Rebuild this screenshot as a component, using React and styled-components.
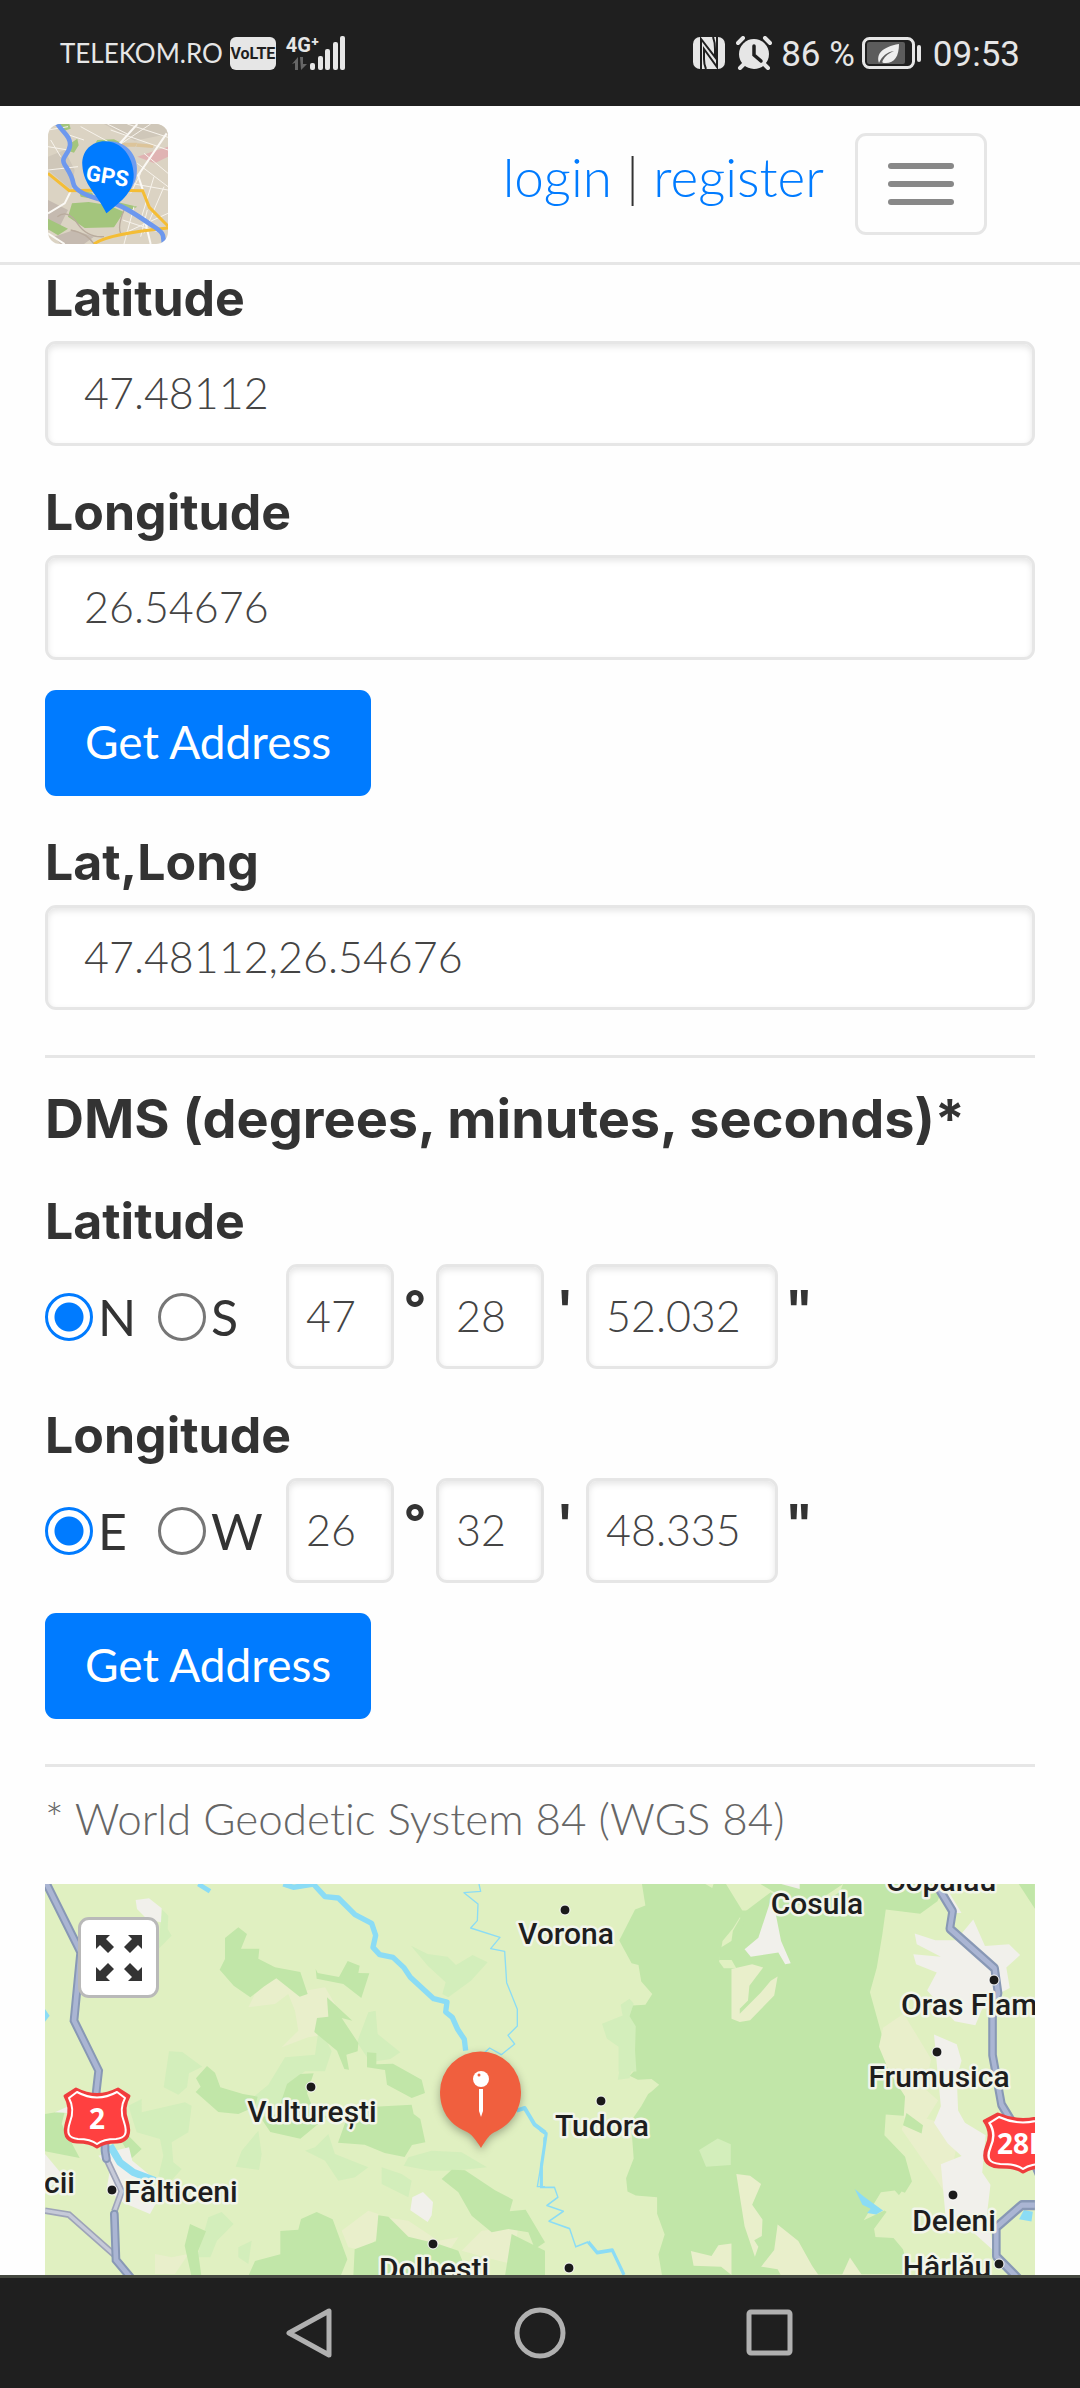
import React from "react";
import styled, { createGlobalStyle } from "styled-components";

const PLACES = [
  { name: "Vulturești", x: 267, y: 238, dot: [266, 203] },
  { name: "Fălticeni", x: 79, y: 318, dot: [67, 306], anchor: "start" },
  { name: "cii", x: 30, y: 309, anchor: "end" },
  { name: "Dolhești", x: 389, y: 395, dot: [388, 360] },
  { name: "Vorona", x: 521, y: 60, dot: [520, 26] },
  { name: "Cosula", x: 772, y: 30 },
  { name: "Copalau", x: 896, y: 7 },
  { name: "Oras Flam", x: 856, y: 131, dot: [949, 96], anchor: "start" },
  { name: "Frumusica", x: 894, y: 203, dot: [892, 168] },
  { name: "Deleni", x: 909, y: 347, dot: [908, 311] },
  { name: "Hârlău", x: 902, y: 393, dot: [954, 380] },
  { name: "Tudora", x: 557, y: 252, dot: [556, 217] },
];

export default function App() {
  return (
    <Page>
      <GlobalStyle />
      <StatusBar />
      <Header>
        <LogoLink href="#" aria-label="GPS home">
          <Logo />
        </LogoLink>
        <Account>
          <a href="#login">login</a> | <a href="#register">register</a>
        </Account>
        <Toggler type="button" aria-label="Toggle navigation">
          <span />
          <span />
          <span />
        </Toggler>
      </Header>
      <Main>
        <Field id="latitude" label="Latitude" value="47.48112" first />
        <Field id="longitude" label="Longitude" value="26.54676" />
        <Button type="button">Get Address</Button>
        <Field id="latlong" label="Lat,Long" value="47.48112,26.54676" />
        <Divider />
        <Title>DMS (degrees, minutes, seconds)*</Title>
        <DmsField
          label="Latitude"
          name="ns"
          options={["N", "S"]}
          values={["47", "28", "52.032"]}
          first
        />
        <DmsField
          label="Longitude"
          name="ew"
          options={["E", "W"]}
          values={["26", "32", "48.335"]}
        />
        <Button type="button">Get Address</Button>
        <Divider />
        <Note>* World Geodetic System 84 (WGS 84)</Note>
        <MapBox>
          <MapDrawing />
          <FullscreenButton type="button" aria-label="Full screen">
            <svg width="46" height="46" viewBox="0 0 46 46" fill="#333">
              {[0, 90, 180, 270].map((turn) => (
                <path
                  key={turn}
                  transform={`rotate(${turn} 23 23)`}
                  d="M0 0h14l-4 4 8 8-6 6-8-8-4 4z"
                />
              ))}
            </svg>
          </FullscreenButton>
        </MapBox>
      </Main>
      <NavBar>
        <button type="button" aria-label="Back">
          <svg width="50" height="56" viewBox="0 0 50 56">
            <path d="M44 5v44L4 27z" />
          </svg>
        </button>
        <button type="button" aria-label="Home">
          <svg width="56" height="56" viewBox="0 0 56 56">
            <circle cx="28" cy="27" r="23" />
          </svg>
        </button>
        <button type="button" aria-label="Recent apps">
          <svg width="56" height="56" viewBox="0 0 56 56">
            <rect x="7" y="6" width="41" height="41" rx="2" />
          </svg>
        </button>
      </NavBar>
    </Page>
  );
}

function Field({ id, label, value, first }) {
  return (
    <FieldGroup $first={first}>
      <Label htmlFor={id}>{label}</Label>
      <Input id={id} type="text" defaultValue={value} />
    </FieldGroup>
  );
}

function DmsField({ label, name, options, values, first }) {
  const units = ["°", "'", '"'];
  const parts = ["degrees", "minutes", "seconds"];
  return (
    <DmsGroup $first={first}>
      <Label as="legend">{label}</Label>
      <DmsRow>
        <Options>
          {options.map((option, i) => (
            <Option key={option}>
              <Radio type="radio" name={name} defaultChecked={i === 0} />
              {option}
            </Option>
          ))}
        </Options>
        {values.map((value, i) => (
          <React.Fragment key={parts[i]}>
            <Input
              type="text"
              aria-label={`${label} ${parts[i]}`}
              defaultValue={value}
              $width={i === 2 ? 192 : 108}
            />
            <Unit>{units[i]}</Unit>
          </React.Fragment>
        ))}
      </DmsRow>
    </DmsGroup>
  );
}

function StatusBar() {
  return (
    <Status>
      <StatusGroup>
        <Carrier>TELEKOM.RO</Carrier>
        <Volte>VoLTE</Volte>
        <Signal>
          <span>4G⁺</span>
          <svg width="60" height="34" viewBox="0 0 60 34" fill="#e6e6e6">
            <path d="M6 28l6-7v13h-3v-7zM14 21h3v7h4l-6 6z" fill="#666" />
            <rect x="24" y="27" width="5" height="7" rx="2" />
            <rect x="32" y="20" width="5" height="14" rx="2" />
            <rect x="39" y="13" width="5" height="21" rx="2" />
            <rect x="47" y="6" width="5" height="28" rx="2" />
            <rect x="54" y="0" width="5" height="34" rx="2" />
          </svg>
        </Signal>
      </StatusGroup>
      <StatusGroup>
        <svg width="32" height="32" viewBox="0 0 32 32">
          <rect width="32" height="32" rx="7" fill="#e6e6e6" />
          <path
            d="M8 32V2l14 18V12Q22 5 20 0M24 0V30L11 12v10q0 6 2 10"
            fill="none"
            stroke="#1f1f1f"
            strokeWidth="2"
          />
        </svg>
        <AlarmIcon />
        <Clock>86 %</Clock>
        <svg width="60" height="32" viewBox="0 0 60 32">
          <rect x="1.5" y="1.5" width="50" height="29" rx="6" fill="none" stroke="#e6e6e6" strokeWidth="3" />
          <rect x="5" y="5" width="38" height="22" rx="2" fill="#5c5c5c" />
          <path d="M17 26c-3-9 3-16 20-19 0 13-5 20-15 19-2 0-2-1-1-3 2-4 6-7 11-9-7 1-12 5-15 12z" fill="#eee" />
          <rect x="55" y="8" width="4" height="17" rx="2" fill="#e6e6e6" />
        </svg>
        <Clock $spaced>09:53</Clock>
      </StatusGroup>
    </Status>
  );
}

function AlarmIcon() {
  return (
    <AlarmSvg width="36" height="34" viewBox="0 0 36 34">
      <g stroke="#e6e6e6" strokeWidth="4" strokeLinecap="round">
        <path d="M2 7l5-5M29 2l5 5M8 28l-4 4M28 28l4 4" />
      </g>
      <circle cx="18" cy="18" r="15" fill="#e6e6e6" />
      <path d="M18 10v9l7 6" fill="none" stroke="#1f1f1f" strokeWidth="3.5" strokeLinecap="round" />
    </AlarmSvg>
  );
}

function Logo() {
  return (
    <svg width="120" height="120" viewBox="12 12 360 360">
      <rect x="12" y="12" width="360" height="360" fill="#dbd3c3" />
      <path d="M12 110l50-20 30 60-10 60-70-60zM180 12h192v30l-100 20z" fill="#cfc7b9" />
      <path d="M12 240l60 30-30 60H12zM30 350l60-20 60 20-30 22H50z" fill="#c5bab0" />
      <path d="M280 110l60-20 32-10v30l-40 20z" fill="#e0b3b3" />
      <path d="M220 68h60l-6 12h-50zM280 70l50 4-4 10-50-4z" fill="#dcc49a" />
      <g fill="#a3c57c">
        <path d="M40 12h36l4 14-24 8zM80 70l20-14 4 20-14 22-14-4zM160 60l50-2 20 10-20 14-60-6z" />
        <path d="M84 250l50-4 60 10 46 20-30 46-88 2-50-34zM12 296l60 30-30 20-30-18zM220 246l60 14-20 10-40-10z" />
        <path d="M104 210l40 8 10 20-44-8z" />
      </g>
      <g fill="none" stroke="#b9ab9d" strokeWidth="4">
        <path d="M40 290q30-24 60 20t80 40M80 330q50 10 70 42M240 270q-20 50-10 70" />
      </g>
      <g fill="none" stroke="#f7f3ec" strokeWidth="3">
        <path d="M12 150l90-10M60 40l60 20M110 20l110 60M200 30l172 60M250 12l122 40M300 100l72 60M280 130l92 70M260 190l112 20M290 160l-30 60M330 170l-40 130M360 200l-60 140" />
        <path d="M236 300l120 40M240 340l132-60M270 260l-30 112M310 270l-20 80M20 60l30 50M12 80l60 10M190 12l60 30M320 12l-90 60M12 30l60-10" />
      </g>
      <g fill="none" stroke="#fbf9f5" strokeWidth="6">
        <path d="M280 12L210 90M368 40L282 166l20 60M12 280l50-30 20-40M12 340l50 32M300 290l20 82" />
      </g>
      <path d="M12 160l64 52 100-2 120 2 20 50 56 56M150 372q40-30 222-48" fill="none" stroke="#f4bd35" strokeWidth="9" />
      <path
        d="M40 12C60 40 80 50 78 76S48 112 62 134 84 166 88 190 140 232 190 244 290 294 330 320 352 350 362 374"
        fill="none"
        stroke="#6d98ee"
        strokeWidth="14"
      />
      <path d="M190 64c62-4 96 50 88 98-4 42-38 70-90 118z" fill="#6d9cf0" />
      <path d="M187 280C160 222 118 196 115 136c-3-46 32-73 68-72 50 0 84 46 86 98 2 52-34 80-82 118z" fill="#007bff" />
      <text x="190" y="191" textAnchor="middle" transform="rotate(9 190 170)" fontSize="66" fontWeight="700" fontFamily="Roboto, sans-serif" fill="#fff">
        GPS
      </text>
    </svg>
  );
}

function Shield({ x, y, stretch = 1 }) {
  return (
    <g transform={`translate(${x} ${y}) scale(${stretch} 1)`} strokeLinejoin="round">
      <path
        d="M-21-29Q0-18 21-29L32-22Q25-10 30 3C34 16 31 23 20 24 10 24 5 25 0 29-5 25-10 24-20 24-31 23-34 16-30 3Q-25-10-32-22z"
        fill="#ff4040"
        stroke="#ee3d3d"
        strokeWidth="3"
      />
      <path
        d="M-20-26Q0-15 20-26L28-20Q22-9 27 4C31 16 28 20 19 21 10 21 5 22 0 26-5 22-10 21-19 21-28 20-31 16-27 4Q-22-9-28-20z"
        fill="none"
        stroke="#fff"
        strokeWidth="2"
      />
    </g>
  );
}

function MapDrawing() {
  return (
    <MapSvg viewBox="0 0 990 391" preserveAspectRatio="xMinYMin slice">
      <rect width="990" height="391" fill="#e0f0c1" />
      {/* western half */}
      <g transform="scale(.33333)">
        <g fill="#e9efcb">
          <path d="M610 370l30-60 60-30 80 40 60-10 30 50-20 90-60 10-80 30 50-50-10-60-20-50-40 30zM1020 1000l70 10 90 60 60-10-40 60-170-40zM890 1040l80-60 30 10v70l-40 40-50-10zM1250 1100l60-60 110-10-10 60 50 60-60-10-80-20zM330 1110l50 10 50-10-40 60h-60z" />
        </g>
        <g fill="#d3eebb">
          <path d="M350 75l20 20-2 40 12 20-40 40zM1098 185l50 25 60 8 25 25 50-30 45 22-50 55-68 50-18-10 10-35-54-50zM372 502l40 2 60 44-40 20-6 42-26 22-44-22zM720 520l90-8 10-70 20 20 20 40-20 60-60 0-40 30-20 60-80 60-30-60 60-50zM970 385l22-5 6 70 68 55-30 20-60 10-40-60zM250 665l40-20v40l130-30 20 10-10 80-50 30 5 60 25 20-40 45-30-25 15-60-10-50-70-20zM590 800l50-60 10 70-8 48-70-10zM780 800l30-10 40-40 20 60 100 40-40 30-50 10-40-60zM1090 820l70-20 90 5 76 45-100 10-70 0-80-15zM1010 850l60 20 30 20-10 50-80-40zM490 1000l40-16 36 36-50 50-20 50-40 0zM580 1090l40-20-10 70-30-20z" />
        </g>
        <g fill="#c1e6a8">
          <path d="M540 162l40-32 26 20-18 44h55l-3 30 50 26 76 14 22 66-24 8-70-55-38 25-40 32-50-35-42-48 16-32zM812 255l6 12 64 12 26-48 36 14-4 22 33 1-24 74-54-42-80-16zM846 340l76 70-32-8 50 75-2 25-34 10 8 45-14-2-22-55-68-56 8-42 34-4zM966 505l28 2v34l50-2 86 48 10 40-40 15-74-40-6-44-54-8zM486 546l24 20 16 44 68 20 44 8-8 30-50 22-60-6-68-60 15-16-14-25zM726 600l40-30 40-2-20 60 20 50 40 20-80 66-90-20-30-44 50-10zM910 690l50-20 140-8 6 28 20 15 15 70-40 8-22 36-60-12-60-25-80-6z" />
          <path d="M0 690l60-10-10 40 54 102-104-20zM240 745l50 50-30 28-30-50zM435 1020l48 22-24 60 10 73h-30l-20-90zM815 984l48 22 44 120-20 50H610l20-45 76-20v-70l54-4 8-32zM1000 994l30 4 60 60 90 22 60 20 20 50 40 26H925l4-80 64-24zM1190 885l30-28 40 2 90 60 54 28-10 35 48-5 58 98-30 20-20-50-60-10-50 10-60-50-40-70zM1400 1050l100 50v76h-120z" />
        </g>
        <g fill="#f1f0eb">
          <path d="M272 48l40-5 38 30-2 42-40-8-32-32zM0 810l50 60-50 60zM30 685l40-18v20zM160 815l70-20 22-5 10 40 60 50-5 30 20 40-22 40-80-34-50-40 10-60zM1102 940l32-16 30 30-4 40-12 20-52-35z" />
        </g>
        <g fill="none" stroke="#8bdcf5" strokeLinejoin="round">
          <path d="M460 0l35 22" strokeWidth="14" />
          <path d="M715 0l30 10 60-10 35 38 40 4 50 50 50 26 12 36-8 36 20 22 40 8 32 30 20 30 70 64 40 10-4 30 20 16 16 36 20 30 4 34" strokeWidth="16" />
          <path d="M195 785l30 50 40 30 65 25" strokeWidth="22" />
          <path d="M1302 0l5 22-50 4 42 34-2 50-20 22 88 28-28 34 42 8 6 94 32 80v50l-28 28 20 26-40 32-35-20-16 14M1497 760v30l-20 118h23" strokeWidth="4" />
          <path d="M1415 680l24-8 30 50 32 24" strokeWidth="12" />
        </g>
        <path d="M0 375l14 20-14 18z" fill="#8bdcf5" />
        <g fill="none" stroke="#9ea4b8" strokeWidth="20">
          <path d="M184 824l46 98-22 60M0 980l72 12 140 124" />
          <path d="M184 824l46 98-22 60M0 980l72 12 140 124" stroke="#c6cad8" strokeWidth="10" />
        </g>
        <g fill="none" stroke="#8898b5" strokeWidth="26" strokeLinecap="round">
          <path d="M5 0l102 205-20 205 74 150-16 140M180 780v20l4 24M208 990l5 138 50 60" />
          <path d="M5 0l102 205-20 205 74 150-16 140M180 780v20l4 24M208 990l5 138 50 60" stroke="#aab5d3" strokeWidth="14" />
        </g>
      </g>
      {/* eastern half */}
      <g transform="translate(495 -143) scale(.3444 .41325)">
        <path
          d="M296 346l10 52-30 10-46 75 36 55 20 4 8 40 32 30-20 26-38 2-10 26 18 38-4 96-12 10 24 10 40-2 22 14-22 16-10 6-20 30-30 36 8 90-22 48 4 32 24 10 62 4v40l22 50-18 48 10 50 140 0 480-2 100 0-20-60-30-30 36-34-60-30-60 24 50-68 40-4 20 18 30-40-20-60-60-52 4-50 70 4 14-30-80-120-20-60-30-90 20-60 16-80 10-60 100 10 50-30 20-40-30-40z"
          fill="#c1e6a8"
        />
        <path d="M540 346h340l-10 20-100 50-100-50-80 50-30 44-10 60 20 30h-36l-14-16 10-50 30-30 30-40zM480 346l20 10 4-10z" fill="#e0f0c1" />
        <path d="M640 346h230l10 0-90 50-90 0-20-30zM700 410l-60 110 10 20-90-10-40 0 4-30 40-20 30-40-30-30z" fill="#c1e6a8" />
        <g fill="#e9efcb">
          <path d="M556 552l60-12 32 8-40 44-4 36-24 20v12l60-50 30-30 20-10-10 46-70 60-30 4-24-8zM570 1048l40 4 32 20-26 50 30 36-2 40-22 10 12 16-10 24-30-74zM438 1234l60 12 20-26 38-4v76l-30-20-80-2zM690 1170l60 40 40 60 20 24H700l-10-16-48-6 38-40zM900 1250l36 44h-60zM996 694l60-34 80 110-20 70 40 30-60 80-40-40 4-50-46-60-30-60zM1060 900l90 20 60 60-30 120-30-40-100-120 8-16z" />
          <path d="M970 1180l80-90 30 10 70-20 60 60 100 154h-200l-40-60-20-30-76-4z" fill="#e0f0c1" />
        </g>
        <g fill="#d3eebb">
          <path d="M180 684l60-20-6-26 26-14 12 12-12 30 18 24-2 60 4 50h-52v-60l-34-20zM462 990l54-28 38 14v50l-72 4zM230 800l36-4-6 20-34 4z" />
        </g>
        <g fill="#f1f0eb">
          <path d="M668 390l12 10 20 84 28 54-16 2-20-28-80 10-18-18 40-28zM1088 466l60 16 60 0 50-50 34 64 70-4 32 26-40 30 10 50-70 30-30 60-60-10-80-74 28-44-60-20-8-24 80 6-70-30zM1144 710l66 24 14 40-14 40 4 80 20 30 60 30-10 90 24 30-10 70 20 90-80-60-60-20-14-130 60-20-40-30-40-50 20-40zM700 346h54v12zM1180 356l44 60-24 0z" />
        </g>
        <path d="M1064 900l48 30-4 20-54-20z" fill="#c1e6a8" />
        <path d="M1390 346h47v60z" fill="#c1e6a8" />
        <g fill="#8bdcf5">
          <path d="M914 1084l26 18 56 34-20 10-26-4 10-10-24-10zM1405 1135l26 4-4 24-36-6z" />
        </g>
        <g fill="none" stroke="#8bdcf5" strokeLinejoin="round">
          <path d="M0 940l18 10-14 80v48" strokeWidth="9" />
          <path d="M0 1080h42l10 24-32 20 48 14-42 24 60 18 18 44 36-12" strokeWidth="4" />
          <path d="M140 1212l26 26 44-6 34 60" strokeWidth="9" />
        </g>
        <g fill="none" stroke="#8898b5" strokeWidth="25" strokeLinejoin="round">
          <path d="M1150 346l48 66-8 42 130 96 10 60-16 50v100l26 120 80 110 40 80M1437 1123h-38l-74 54v70l66 56" />
          <path d="M1150 346l48 66-8 42 130 96 10 60-16 50v100l26 120 80 110 40 80M1437 1123h-38l-74 54v70l66 56" stroke="#aab5d3" strokeWidth="13" />
        </g>
      </g>

      <Shield x={52} y={234} />
      <Shield x={978} y={259} stretch={1.2} />
      <ShieldText x="52" y="245" textAnchor="middle">2</ShieldText>
      <ShieldText x="952" y="270">28B</ShieldText>

      {PLACES.map(({ name, x, y, dot, anchor = "middle" }) => (
        <React.Fragment key={name}>
          {dot && <Dot cx={dot[0]} cy={dot[1]} r="5" />}
          <PlaceName x={x} y={y} textAnchor={anchor}>
            {name}
          </PlaceName>
        </React.Fragment>
      ))}
      <Dot cx="524" cy="384" r="5" />

      <Marker>
        <path
          d="M436 264C431 256 427 250 420 247 404 240 395 226 395 208a40.500 40.500 0 0 1 81 0c0 18-10 32-24 39-8 3-11 9-16 17z"
          fill="#f05f3e"
        />
        <circle cx="436" cy="195" r="8" fill="#fff" />
        <circle cx="434" cy="191" r="1.500" fill="#f05f3e" />
        <path d="M434 205h4v22l-2 6-2-6z" fill="#fff" />
      </Marker>
    </MapSvg>
  );
}

const GlobalStyle = createGlobalStyle`
  * {
    box-sizing: border-box;
  }
  body {
    margin: 0;
    background: #fefefe;
    color: #333;
    font-family: Lato, "Noto Sans", sans-serif;
    font-size: 50px;
    font-variant-ligatures: none;
    line-height: 60px;
  }
  button,
  input {
    font-family: inherit;
  }
`;

const Page = styled.div`
  min-height: 100vh;
  display: flex;
  flex-direction: column;
`;

const Status = styled.div`
  height: 106px;
  padding: 0 60px;
  display: flex;
  align-items: center;
  justify-content: space-between;
  background: #1f1f1f;
  color: #e6e6e6;
`;

const StatusGroup = styled.div`
  display: flex;
  align-items: center;
  gap: 7px;
`;

const Carrier = styled.span`
  font-size: 26px;
  line-height: 32px;
`;

const Volte = styled.span`
  width: 46px;
  margin-right: 3px;
  border-radius: 6px;
  background: #e6e6e6;
  color: #1f1f1f;
  font: 700 16px/33px Roboto, sans-serif;
  text-align: center;
`;

const Signal = styled.span`
  position: relative;
  display: flex;
  span {
    position: absolute;
    left: 0;
    top: 0;
    font: 700 20px/18px Roboto, sans-serif;
  }
`;

const Clock = styled.span`
  margin-left: ${({ $spaced }) => ($spaced ? "4px" : "0")};
  padding-top: 3px;
  font-family: Roboto, sans-serif;
  font-size: 35px;
  line-height: 42px;
`;

const AlarmSvg = styled.svg`
  margin: 0 2px 0 4px;
`;

const Header = styled.header`
  padding: 18px 93px 18px 48px;
  display: flex;
  align-items: center;
  border-bottom: 3px solid #e6e6e6;
`;

const LogoLink = styled.a`
  width: 120px;
  height: 120px;
  margin-right: auto;
  border-radius: 12px;
  overflow: hidden;
`;

const Account = styled.nav`
  margin-right: 31px;
  padding-bottom: 14px;
  font-size: 53px;
  font-weight: 300;
  a {
    color: #007bff;
    text-decoration: none;
  }
`;

const Toggler = styled.button`
  width: 132px;
  height: 102px;
  padding: 0;
  display: flex;
  flex-direction: column;
  align-items: center;
  justify-content: center;
  gap: 12px;
  border: 3px solid #e6e6e6;
  border-radius: 11px;
  background: transparent;
  span {
    width: 66px;
    height: 6px;
    border-radius: 3px;
    background: #888;
  }
`;

const Main = styled.main`
  flex: 1;
  padding: 0 45px;
  display: flex;
  flex-direction: column;
  align-items: stretch;
`;

const FieldGroup = styled.div`
  margin-top: ${({ $first }) => ($first ? "3px" : "36px")};
`;

const DmsGroup = styled.fieldset`
  min-width: 0;
  margin: ${({ $first }) => ($first ? "38px" : "36px")} 0 0;
  padding: 0;
  border: 0;
`;

const Label = styled.label`
  display: block;
  margin-bottom: 13px;
  padding: 0;
  font-family: Inter, sans-serif;
  font-weight: 700;
`;

const Input = styled.input`
  display: block;
  width: ${({ $width }) => ($width ? `${$width}px` : "100%")};
  height: 105px;
  padding: 0 ${({ $width }) => ($width ? "17px" : "36px")} 2px;
  border: 3px solid #e6e6e6;
  border-radius: 11px;
  background: #fff;
  box-shadow: inset 0 3px 6px rgba(0, 0, 0, 0.1);
  color: #444;
  font-size: 43px;
  font-weight: 300;
`;

const Button = styled.button`
  align-self: flex-start;
  height: 106px;
  margin-top: 30px;
  padding: 0 40px 3px;
  border: 0;
  border-radius: 11px;
  background: #007bff;
  color: #fff;
  font-size: 46px;
`;

const Divider = styled.hr`
  width: 100%;
  margin: 45px 0 0;
  border: 0;
  border-top: 3px solid #e6e6e6;
`;

const Title = styled.h2`
  margin: 27px 0 0;
  font-family: Inter, sans-serif;
  font-size: 54px;
  font-weight: 700;
  line-height: 68px;
`;

const DmsRow = styled.div`
  display: flex;
  align-items: center;
`;

const Options = styled.div`
  display: grid;
  grid-template-columns: 113px 128px;
`;

const Option = styled.label`
  display: flex;
  align-items: center;
  gap: 5px;
`;

const Radio = styled.input`
  appearance: none;
  flex: none;
  width: 48px;
  height: 48px;
  margin: 0;
  border: 3px solid #767676;
  border-radius: 50%;
  background: #fff;
  &:checked {
    border-color: #007bff;
    background: radial-gradient(circle, #007bff 14px, #fff 15px);
  }
`;

const Unit = styled.span`
  align-self: flex-start;
  width: 42px;
  padding: 14px 0;
  font-family: Inter, sans-serif;
  font-weight: 700;
  text-align: center;
`;

const Note = styled.p`
  margin: 18px 0 33px;
  color: #666;
  font-size: 44px;
  font-weight: 300;
  line-height: 66px;
`;

const MapBox = styled.div`
  position: relative;
  flex: 1;
  min-height: 391px;
  overflow: hidden;
  background: #e0f0c1;
`;

const MapSvg = styled.svg`
  position: absolute;
  inset: 0;
  width: 100%;
  height: 100%;
`;

const PlaceName = styled.text`
  fill: #1e1e1e;
  stroke: #f2f5ea;
  stroke-width: 5px;
  stroke-linejoin: round;
  paint-order: stroke;
  font: 500 30px Roboto, sans-serif;
`;

const Dot = styled.circle`
  fill: #1a1a1a;
  stroke: #fff;
  stroke-width: 1px;
`;

const ShieldText = styled.text`
  fill: #fff;
  font: 700 28px "Noto Sans", sans-serif;
`;

const Marker = styled.g`
  filter: drop-shadow(0 3px 4px rgba(0, 0, 0, 0.3));
`;

const FullscreenButton = styled.button`
  position: absolute;
  left: 33px;
  top: 33px;
  width: 81px;
  height: 81px;
  padding: 0;
  display: grid;
  place-items: center;
  border: 3px solid #b9b9b9;
  border-radius: 11px;
  background: #fff;
`;

const NavBar = styled.nav`
  height: 114px;
  display: flex;
  align-items: center;
  justify-content: center;
  gap: 170px;
  border-top: 3px solid #454840;
  background: #1f1f1f;
  button {
    width: 60px;
    height: 60px;
    padding: 0;
    display: grid;
    place-items: center;
    border: 0;
    background: transparent;
  }
  svg {
    fill: none;
    stroke: #b0b0b0;
    stroke-width: 5px;
    stroke-linejoin: round;
  }
`;
